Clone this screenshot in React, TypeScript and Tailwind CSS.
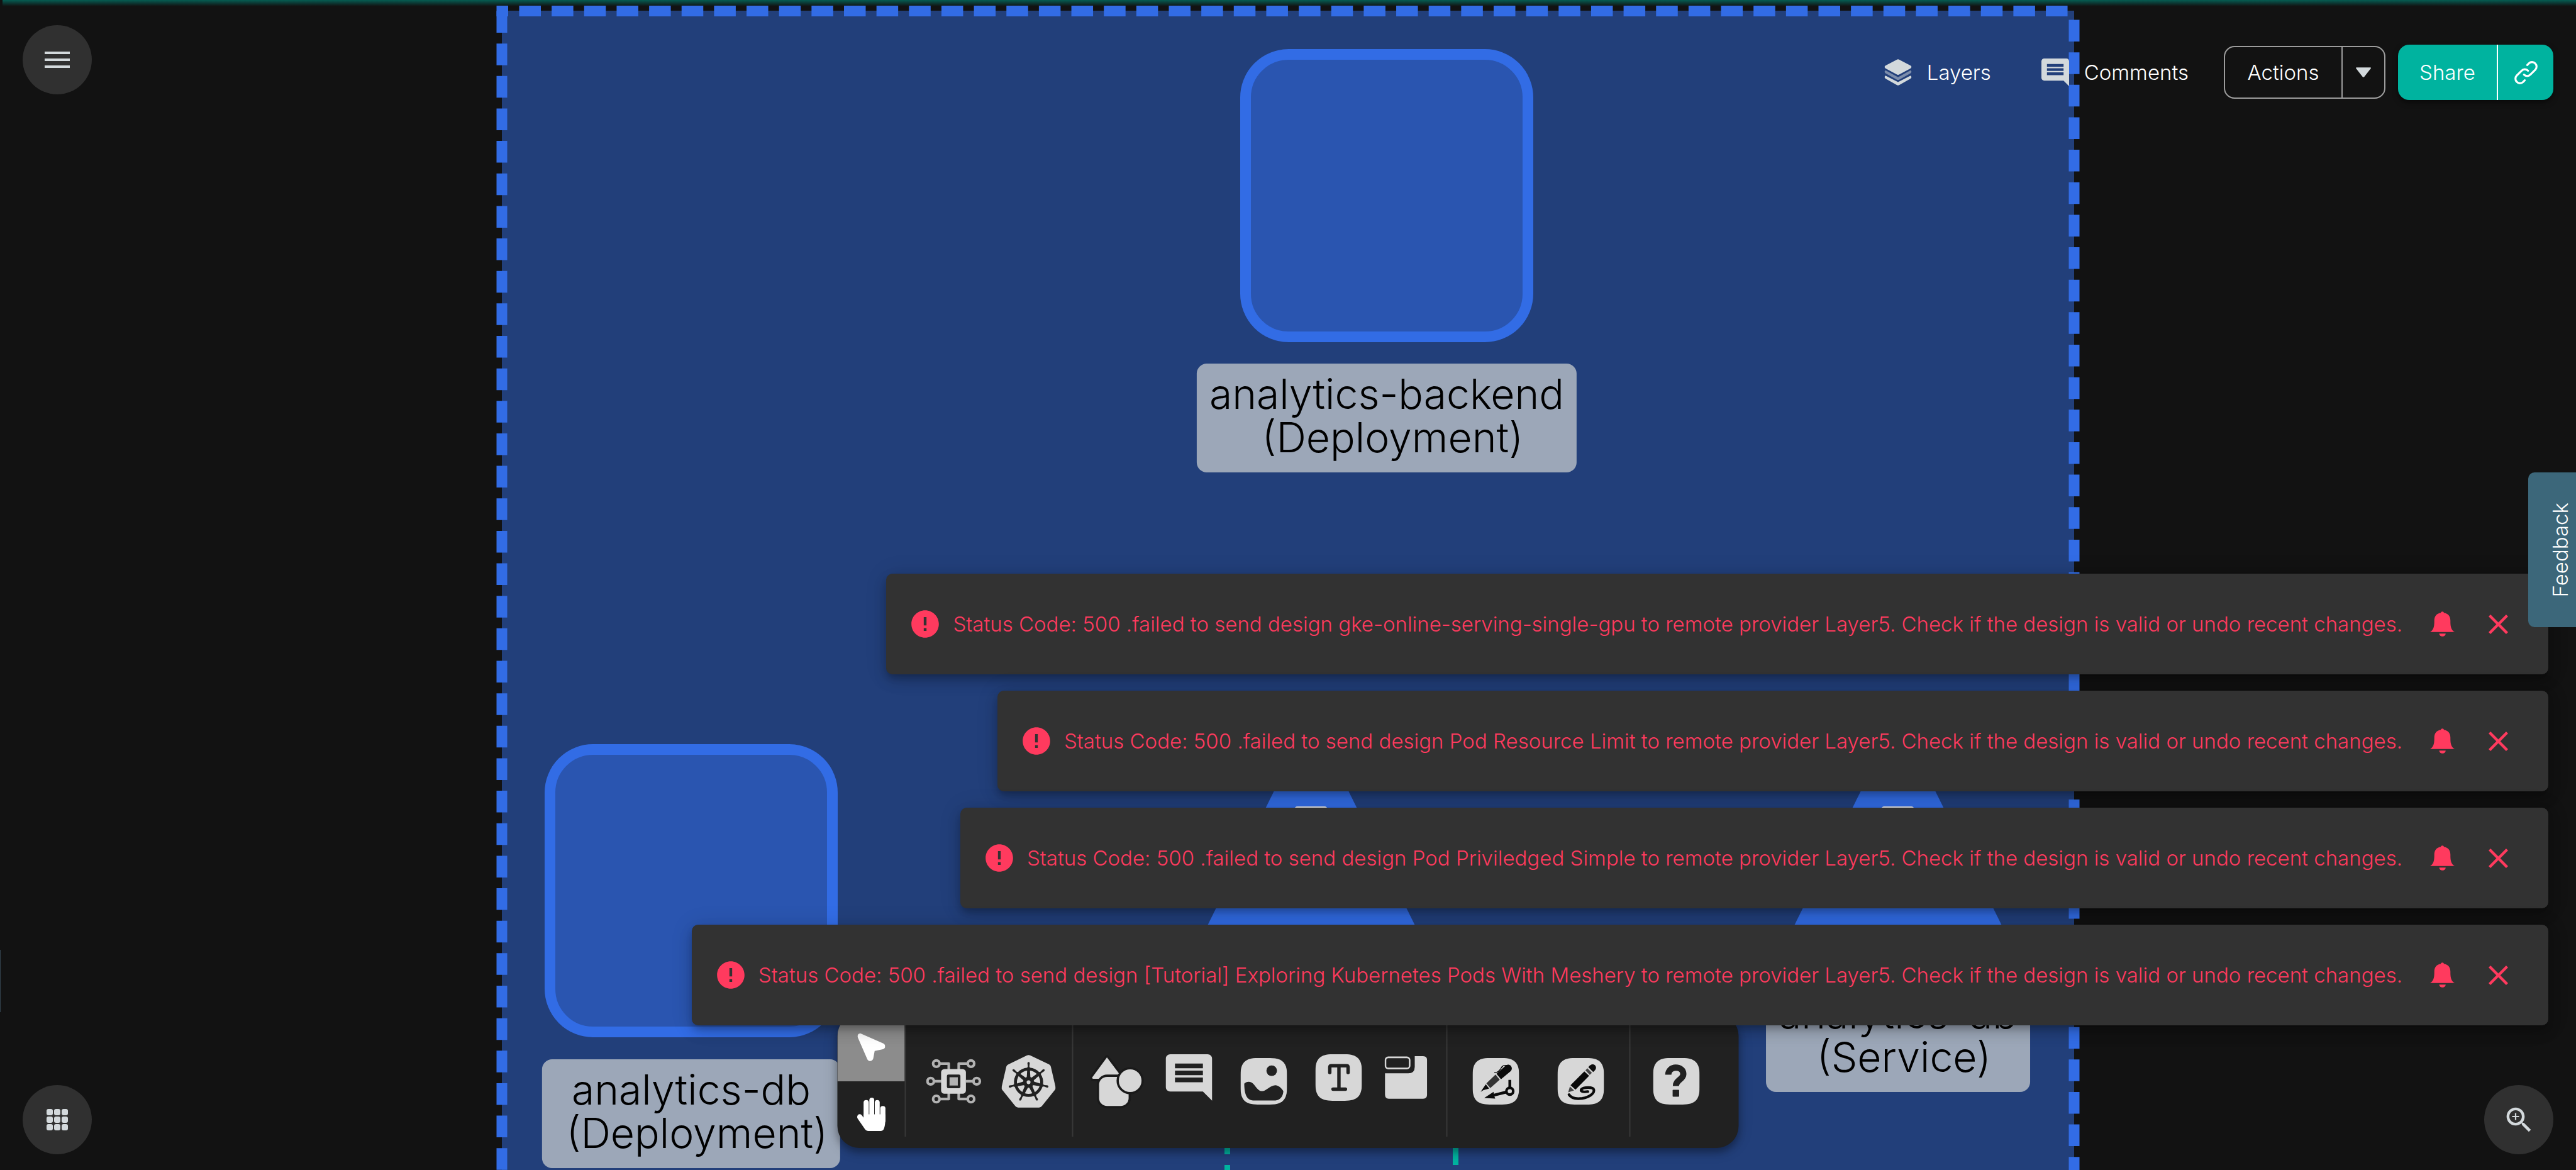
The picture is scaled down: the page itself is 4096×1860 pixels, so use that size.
import type { ReactNode } from "react";
import { SiKubernetes } from "react-icons/si";

const SQUIRCLE =
  "M0 110C0 30 30 0 110 0H190C270 0 300 30 300 110V190C300 270 270 300 190 300H110C30 300 0 270 0 190Z";

function CommentIcon({ className }: { className: string }) {
  return (
    <svg viewBox="2 2 20 20" className={className} fill="currentColor" aria-hidden="true">
      <path d="M21.99 4c0-1.1-.89-2-1.99-2H4c-1.1 0-2 .9-2 2v12c0 1.1.9 2 2 2h14l4 4-.01-18zM18 14H6v-2h12v2zm0-3H6V9h12v2zm0-3H6V6h12v2z" />
    </svg>
  );
}

function LayersIcon() {
  return (
    <svg viewBox="0 0 58 57" className="w-11 h-[42px]" fill="currentColor" aria-hidden="true">
      <path d="M26 1.2a6 6 0 0 1 6 0L56 14q4 3 0 6L32 33a6 6 0 0 1-6 0L2 20q-4-3 0-6z" />
      <path opacity="0.5" d="M2 24q-4 3 0 6.5L26 44a6 6 0 0 0 6 0L56 30.500q4-3.500 0-6.500L29 39z" />
      <path d="M2 35.500q-4 3 0 6.500L26 55.800a6 6 0 0 0 6 0L56 42q4-3.500 0-6.500L29 49.500z" />
    </svg>
  );
}

function LinkIcon() {
  const d = "M83 26L94 15A29 29 0 0 1 135 56L103 88A29 29 0 0 1 62 88";
  return (
    <svg
      viewBox="0 0 150 150"
      className="size-[37px]"
      fill="none"
      stroke="currentColor"
      strokeWidth="13"
      strokeLinecap="round"
      strokeLinejoin="round"
      aria-hidden="true"
    >
      <path d={d} />
      <path d={d} transform="rotate(180 75 75)" />
    </svg>
  );
}

function BellIcon() {
  return (
    <svg viewBox="0 0 140 142" className="w-[39px] h-10" fill="currentColor" aria-hidden="true">
      <path d="M70 0c5 0 8 3 9 7 24 4 37 20 37 45 0 24 0 50 24 65H0c24-15 24-41 24-65C24 27 37 11 61 7 62 3 65 0 70 0z" />
      <path d="M52 126h37a18.500 16 0 0 1-37 0z" />
    </svg>
  );
}

function ArrowIcon() {
  return (
    <svg viewBox="0 0 100 100" className="size-11" fill="currentColor" aria-hidden="true">
      <path d="M0 12C-1 3 6-2 14 1L93 36C103 41 102 54 92 57L62 63 57 90C53 103 39 102 35 92z" />
    </svg>
  );
}

function HandIcon() {
  return (
    <svg viewBox="0 0 100 116" className="w-[46px] h-[53px]" fill="currentColor" aria-hidden="true">
      <rect x="23" y="8" width="18" height="80" rx="9" />
      <rect x="43" y="0" width="17" height="80" rx="8.500" />
      <rect x="62" y="8" width="17" height="80" rx="8.500" />
      <rect x="81" y="29" width="18" height="60" rx="9" />
      <path d="M23 58H99V75C98 95 96 103 93 110Q90 116 84 116H38Q32 116 28 110L3 74C-4 65 6 52 16 60L24 71z" />
    </svg>
  );
}

function ChipIcon() {
  const rings = [
    [67, 31],
    [293, 31],
    [30, 146],
    [330, 146],
    [67, 262],
    [293, 262],
  ];
  return (
    <svg viewBox="0 0 361 293" className="w-[88px] h-[72px]" aria-hidden="true">
      <g fill="none" stroke="#b2b2b2" strokeWidth="17" strokeLinejoin="round">
        {rings.map(([x, y]) => (
          <circle key={`${x}-${y}`} cx={x} cy={y} r="21" />
        ))}
        <path d="M92 31H148V70M268 31H213V70M55 146H100M260 146H305M92 262H148V222M268 262H213V222" />
      </g>
      <rect x="98" y="66" width="162" height="162" rx="22" fill="#d7d7d7" />
      <rect x="136" y="102" width="88" height="90" rx="10" fill="#212121" />
      <rect x="153" y="120" width="54" height="54" fill="#b2b2b2" />
    </svg>
  );
}

function ShapesIcon() {
  return (
    <svg viewBox="0 0 352 356" className="size-[87px]" aria-hidden="true">
      <g fill="#d7d7d7" stroke="#1a1a1a" strokeWidth="29" strokeLinejoin="round" style={{ paintOrder: "stroke" }}>
        <path d="M111 25L205 150Q207 164 196 164H24Q12 164 16 153z" />
        <rect x="60" y="151" width="192" height="190" rx="52" />
        <circle cx="262" cy="176" r="74" />
      </g>
    </svg>
  );
}

function ImageIcon() {
  return (
    <svg viewBox="0 0 300 300" className="size-[74px]" aria-hidden="true">
      <path d={SQUIRCLE} fill="#d7d7d7" />
      <circle cx="201" cy="82" r="34" fill="#212121" />
      <path
        d="M24 165C40 148 68 148 87 171C108 198 120 216 144 213C168 209 192 176 225 175C248 177 264 195 276 213C275 246 256 274 216 274H90C44 274 25 244 24 165z"
        fill="#212121"
      />
    </svg>
  );
}

function TextIcon() {
  return (
    <svg viewBox="0 0 300 300" className="size-[74px]" aria-hidden="true">
      <path d={SQUIRCLE} fill="#d7d7d7" />
      <g fill="none" stroke="#212121" strokeWidth="22" strokeLinecap="round" strokeLinejoin="round">
        <path d="M93 118V84Q93 74 103 74H201Q211 74 211 84V118M152 76V224M114 225H194" />
      </g>
    </svg>
  );
}

function SectionIcon() {
  return (
    <svg viewBox="-1 0 92 92" className="size-[68px]" aria-hidden="true">
      <rect x="1" y="2.500" width="52" height="24" rx="6" fill="none" stroke="#d7d7d7" strokeWidth="3.500" />
      <path d="M64 0H82Q90.500 0 90.500 8.500V83Q90.500 91.500 82 91.500H8Q0 91.500 0 83V37H50Q64 37 64 23z" fill="#d7d7d7" />
    </svg>
  );
}

function PenIcon() {
  return (
    <svg viewBox="0 0 300 300" className="size-[74px]" aria-hidden="true">
      <path d={SQUIRCLE} fill="#d7d7d7" />
      <path d="M52 218L85 169 107 197Q75 203 52 218z" fill="#0a0a0a" />
      <path d="M89 163L148 106 175 140 114 194z" fill="#333333" />
      <path d="M154 101L217 46C232 36 252 46 253 66 253 76 249 82 244 86L183 137z" fill="#0a0a0a" />
      <path d="M140 95C168 92 178 78 183 66S200 44 222 48" fill="none" stroke="#0a0a0a" strokeWidth="5" />
      <path d="M160 90L196 54" fill="none" stroke="#0a0a0a" strokeWidth="4" />
      <circle cx="240" cy="214" r="22" fill="none" stroke="#0a0a0a" strokeWidth="17" />
      <path d="M240 141V190M219 219L132 241" fill="none" stroke="#0a0a0a" strokeWidth="18" />
      <path d="M75 257L135 218 138 240 146 261z" fill="#0a0a0a" />
    </svg>
  );
}

function PencilIcon() {
  return (
    <svg viewBox="0 0 300 300" className="size-[74px]" aria-hidden="true">
      <path d={SQUIRCLE} fill="#d7d7d7" />
      <path d="M69 221L80 183 107 209z" fill="#444444" />
      <path d="M84 175L173 86 204 115 116 204z" fill="#0a0a0a" />
      <path d="M180 79L193 66 222 95 208 108z" fill="#444444" />
      <path d="M199 59C214 36 240 34 248 58 250 72 242 80 230 90z" fill="#0a0a0a" />
      <path
        d="M74 236C90 262 130 264 160 260 210 252 240 225 234 203 228 185 170 188 156 200 144 212 158 222 196 216"
        fill="none"
        stroke="#0a0a0a"
        strokeWidth="17"
        strokeLinecap="round"
      />
    </svg>
  );
}

function HelpIcon() {
  return (
    <svg viewBox="0 0 300 300" className="size-[74px]" aria-hidden="true">
      <path d={SQUIRCLE} fill="#d7d7d7" />
      <path
        d="M98 107C98 82 118 62 146 62 175 62 195 78 195 103 195 138 147 140 147 180"
        fill="none"
        stroke="#212121"
        strokeWidth="40"
      />
      <rect x="126" y="205" width="42" height="44" rx="4" fill="#212121" />
    </svg>
  );
}

const messages = [
  "Status Code: 500 .failed to send design gke-online-serving-single-gpu to remote provider Layer5. Check if the design is valid or undo recent changes.",
  "Status Code: 500 .failed to send design Pod Resource Limit to remote provider Layer5. Check if the design is valid or undo recent changes.",
  "Status Code: 500 .failed to send design Pod Priviledged Simple to remote provider Layer5. Check if the design is valid or undo recent changes.",
  "Status Code: 500 .failed to send design [Tutorial] Exploring Kubernetes Pods With Meshery to remote provider Layer5. Check if the design is valid or undo recent changes.",
];

function Notification({ text }: { text: string }) {
  return (
    <div
      role="alert"
      className="flex h-40 items-center rounded-[10px] bg-[#323232] pl-[38px] pr-16 text-[#ff3a5e] shadow-[0_7px_11px_-2px_rgba(0,0,0,0.2),0_10px_22px_rgba(0,0,0,0.14),0_2px_36px_rgba(0,0,0,0.12)]"
    >
      <svg viewBox="1 1 22 22" className="size-12 shrink-0" fill="currentColor" aria-hidden="true">
        <path d="M12 2C6.480 2 2 6.480 2 12s4.480 10 10 10 10-4.480 10-10S17.520 2 12 2zm1 15h-2v-2h2v2zm0-4h-2V7h2v6z" />
      </svg>
      <p className="ml-5 whitespace-nowrap text-[33px] leading-[50px] font-light">{text}</p>
      <button type="button" aria-label="Open notification center" className="ml-11">
        <BellIcon />
      </button>
      <button type="button" aria-label="Dismiss" className="ml-[54px]">
        <svg viewBox="5 5 14 14" className="size-[31px]" fill="currentColor" aria-hidden="true">
          <path d="M19 6.410L17.590 5 12 10.590 6.410 5 5 6.410 10.590 12 5 17.590 6.410 19 12 13.410 17.590 19 19 17.590 13.410 12z" />
        </svg>
      </button>
    </div>
  );
}

function NodeLabel({ place, name, kind }: { place: string; name: string; kind: string }) {
  return (
    <div
      className={`absolute flex h-[173px] -translate-x-1/2 flex-col items-center justify-center rounded-2xl bg-[#9ca7b8] px-5 pb-2 text-[66px] leading-[69px] font-light whitespace-pre text-black ${place}`}
    >
      <span>{name}</span>
      <span>{` ${kind}`}</span>
    </div>
  );
}

function Canvas() {
  return (
    <main className="absolute inset-0 overflow-hidden">
      <div className="absolute top-[17px] bottom-0 left-[798px] w-[2500px] bg-[#223f7a]" />
      <svg className="absolute inset-0 size-full" aria-hidden="true">
        <g fill="none" stroke="#326ce5" strokeWidth="17" strokeDasharray="34.500 17.150">
          <path d="M798 17.500V1900" />
          <path d="M825.500 17.500H3298" />
          <path d="M3298 31.500V1900" />
        </g>
        <path d="M789.500 17.500H808" stroke="#326ce5" strokeWidth="17" />
        <g fill="#326ce5">
          <path d="M2085 1138L2288 1548H1882z" />
          <path d="M3018 1138L3221 1548H2815z" />
        </g>
        <g fill="#e6e6e6">
          <rect x="2058" y="1282" width="53" height="60" rx="5" />
          <rect x="2991" y="1282" width="53" height="60" rx="5" />
        </g>
        <g fill="none" stroke="#00b39f" strokeWidth="9">
          <path d="M1951.500 1817V1835M1951.500 1852V1860" />
          <path d="M2314.500 1817V1852" />
        </g>
      </svg>
      <div className="absolute top-[78px] left-[1972px] size-[466px] rounded-[77px] border-[17px] border-[#326ce5] bg-[#2a55b0]" />
      <div className="absolute top-[1183px] left-[866px] size-[466px] rounded-[77px] border-[17px] border-[#326ce5] bg-[#2a55b0]" />
      <NodeLabel place="top-[578px] left-[2205px]" name="analytics-backend" kind="(Deployment)" />
      <NodeLabel place="top-[1684px] left-[1099px]" name="analytics-db" kind="(Deployment)" />
      <NodeLabel place="top-[1563px] left-[3018px]" name="analytics-db" kind="(Service)" />
      <div className="absolute top-[1510px] left-0 h-[99px] w-px bg-[#33424d]" />
      <div className="absolute top-0 right-0 left-1 h-2.5 bg-linear-to-b from-[#055c52] to-transparent" />
    </main>
  );
}

function Divider() {
  return <div className="my-[18px] w-0.5 shrink-0 bg-[#383838]" />;
}

function Tool({ label, raised, children }: { label: string; raised?: boolean; children: ReactNode }) {
  return (
    <button type="button" aria-label={label} className={raised ? "pb-3" : ""}>
      {children}
    </button>
  );
}

function Toolbar() {
  return (
    <div
      role="toolbar"
      aria-label="Design tools"
      className="absolute bottom-[35px] left-1/2 flex h-[213px] -translate-x-1/2 overflow-hidden rounded-[35px] bg-[#212121] text-[#d7d7d7] shadow-[0_7px_11px_rgba(0,0,0,0.25),0_4px_22px_rgba(0,0,0,0.2)]"
    >
      <div className="flex w-[107px] flex-col text-white">
        <button type="button" aria-label="Select" className="flex flex-1 items-center justify-center bg-[#8c8c8c]">
          <ArrowIcon />
        </button>
        <button type="button" aria-label="Pan" className="flex flex-1 items-center justify-center">
          <HandIcon />
        </button>
      </div>
      <Divider />
      <div className="flex items-center gap-8 pr-[26px] pl-8">
        <Tool label="Components">
          <ChipIcon />
        </Tool>
        <Tool label="Kubernetes">
          <SiKubernetes className="size-[86px]" />
        </Tool>
      </div>
      <Divider />
      <div className="flex items-center pr-[30px] pl-[26px]">
        <Tool label="Shapes">
          <ShapesIcon />
        </Tool>
        <div className="ml-[34px] flex items-center gap-[45px]">
          <Tool label="Comment" raised>
            <CommentIcon className="size-[74px]" />
          </Tool>
          <Tool label="Image">
            <ImageIcon />
          </Tool>
          <Tool label="Text" raised>
            <TextIcon />
          </Tool>
        </div>
        <div className="ml-9 flex">
          <Tool label="Section" raised>
            <SectionIcon />
          </Tool>
        </div>
      </div>
      <Divider />
      <div className="flex items-center gap-[61px] px-10">
        <Tool label="Pen">
          <PenIcon />
        </Tool>
        <Tool label="Pencil">
          <PencilIcon />
        </Tool>
      </div>
      <Divider />
      <div className="flex items-center pr-[62px] pl-9">
        <Tool label="Help">
          <HelpIcon />
        </Tool>
      </div>
    </div>
  );
}

function Header() {
  return (
    <header className="absolute inset-x-0 top-0 flex items-start justify-between px-9 pt-10 text-[33px] leading-[50px] font-light text-white">
      <button
        type="button"
        aria-label="Menu"
        className="flex size-[110px] flex-col items-center justify-center gap-[7px] rounded-full bg-[#303030]"
      >
        <span className="h-1 w-10 bg-[#d3d9dc]" />
        <span className="h-1 w-10 bg-[#d3d9dc]" />
        <span className="h-1 w-10 bg-[#d3d9dc]" />
      </button>
      <div className="mt-[31px] flex items-center">
        <button type="button" className="flex items-center gap-6">
          <span className="text-[#d3d9dc]">
            <LayersIcon />
          </span>
          Layers
        </button>
        <button type="button" className="ml-20 flex items-center gap-6">
          <span className="text-[#d3d9dc]">
            <CommentIcon className="size-11" />
          </span>
          Comments
        </button>
        <div className="ml-14 flex h-[84px] overflow-hidden rounded-[17px] border-2 border-[#9c9c9c]">
          <button type="button" className="w-[185px]">
            Actions
          </button>
          <button
            type="button"
            aria-label="More actions"
            className="flex w-[68px] items-center justify-center border-l-2 border-[#9c9c9c] text-[#d3d9dc]"
          >
            <svg viewBox="0 0 97 63" className="h-4 w-6" fill="currentColor" aria-hidden="true">
              <path d="M4 0H93Q99 1 96 6L55 59Q48 66 42 59L1 6Q-1 1 4 0z" />
            </svg>
          </button>
        </div>
        <div className="ml-5 flex h-[88px] overflow-hidden rounded-[18px] bg-[#00b39f] shadow-[0_4px_8px_rgba(0,0,0,0.5)]">
          <button type="button" className="w-[157px]">
            Share
          </button>
          <button
            type="button"
            aria-label="Copy link"
            className="flex w-[90px] items-center justify-center border-l-2 border-white"
          >
            <LinkIcon />
          </button>
        </div>
      </div>
    </header>
  );
}

export default function App() {
  return (
    <div className="relative h-screen w-full overflow-hidden bg-[#121212] font-['Inter',sans-serif]">
      <Canvas />
      <Header />
      <button
        type="button"
        aria-label="Apps"
        className="absolute bottom-[25px] left-9 flex size-[110px] items-center justify-center rounded-full bg-[#303030]"
      >
        <span className="grid grid-cols-3 gap-0.5">
          {Array.from({ length: 9 }, (_, i) => (
            <span key={i} className="size-2.5 rounded-[3px] bg-[#d3d9dc]" />
          ))}
        </span>
      </button>
      <button
        type="button"
        aria-label="Zoom in"
        className="absolute right-9 bottom-[25px] flex size-[110px] items-center justify-center rounded-full bg-[#303030] text-[#d3d9dc]"
      >
        <svg viewBox="0 0 24 24" className="size-[53px]" fill="currentColor" aria-hidden="true">
          <path d="M15.500 14h-.79l-.28-.27C15.410 12.590 16 11.110 16 9.500 16 5.910 13.090 3 9.500 3S3 5.910 3 9.500 5.910 16 9.500 16c1.610 0 3.090-.59 4.230-1.570l.27.280v.790l5 4.990L20.490 19l-4.990-5zm-6 0C7.010 14 5 11.990 5 9.500S7.010 5 9.500 5 14 7.010 14 9.500 11.990 14 9.500 14z" />
          <path d="M12 10h-2v2H9v-2H7V9h2V7h1v2h2v1z" />
        </svg>
      </button>
      <Toolbar />
      <section aria-label="Notifications" className="absolute right-11 bottom-[230px] flex flex-col items-end gap-[26px]">
        {messages.map((m) => (
          <Notification key={m} text={m} />
        ))}
      </section>
      <button
        type="button"
        className="absolute top-[751px] right-0 flex h-[246px] w-[76px] items-center justify-end rounded-l-[10px] bg-[#3c677a] pr-0.5 text-[33px] leading-[45px] font-light text-white"
      >
        <span className="rotate-180 [writing-mode:vertical-rl]">Feedback</span>
      </button>
    </div>
  );
}
